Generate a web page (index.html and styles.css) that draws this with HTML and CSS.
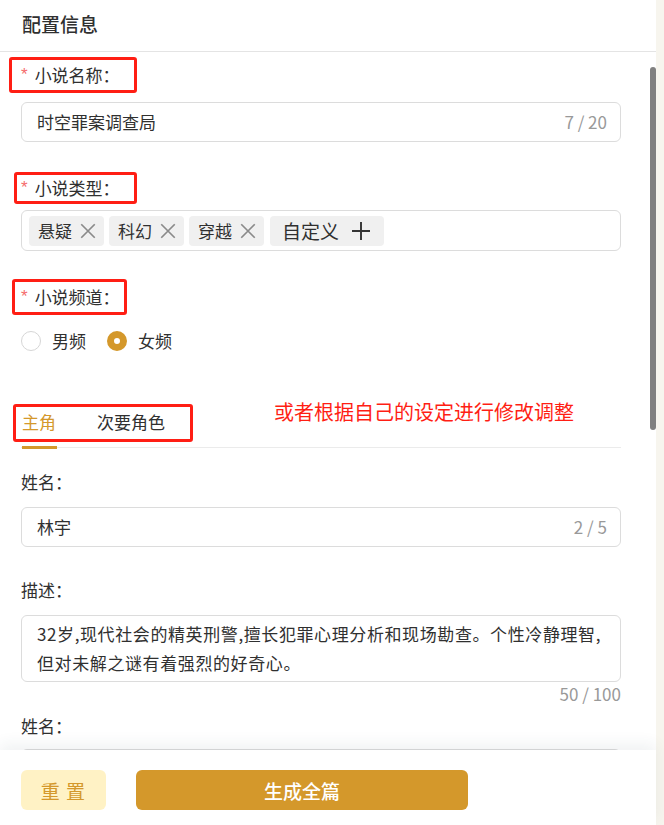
FILE: index.html
```html
<!DOCTYPE html>
<html lang="zh-CN">
<head>
  <meta charset="UTF-8">
  <meta name="viewport" content="width=device-width, initial-scale=1.0">
  <title>配置信息</title>
  <link rel="stylesheet" href="styles.css">
</head>
<body>
  <div class="panel">
    <header class="panel-header">
      <span class="panel-title">配置信息</span>
    </header>

    <div class="panel-body">
      <div class="form">
        <!-- 小说名称 -->
        <div class="mark mark-name"><span class="req">*</span>小说名称：</div>
        <div class="input input-first">
          <span class="input-value">时空罪案调查局</span>
          <span class="count">7 / 20</span>
        </div>

        <!-- 小说类型 -->
        <div class="mark mark-type"><span class="req">*</span>小说类型：</div>
        <div class="tag-input">
          <span class="tag">悬疑
            <svg class="tag-close" viewBox="0 0 16 16"><path d="M2 2L14 14M14 2L2 14"/></svg>
          </span>
          <span class="tag">科幻
            <svg class="tag-close" viewBox="0 0 16 16"><path d="M2 2L14 14M14 2L2 14"/></svg>
          </span>
          <span class="tag">穿越
            <svg class="tag-close" viewBox="0 0 16 16"><path d="M2 2L14 14M14 2L2 14"/></svg>
          </span>
          <span class="tag tag-add">自定义
            <svg class="tag-plus" viewBox="0 0 16 16"><path d="M8 0V16M0 8H16"/></svg>
          </span>
        </div>

        <!-- 小说频道 -->
        <div class="mark mark-channel"><span class="req">*</span>小说频道：</div>
        <div class="radios">
          <label class="radio"><span class="radio-dot"></span>男频</label>
          <label class="radio checked"><span class="radio-dot"></span>女频</label>
        </div>

        <!-- 角色 -->
        <div class="tabs">
          <div class="mark mark-tabs">
            <span class="tab active">主角</span>
            <span class="tab">次要角色</span>
          </div>
          <span class="note">或者根据自己的设定进行修改调整</span>
        </div>

        <div class="field-label first">姓名：</div>
        <div class="input">
          <span class="input-value">林宇</span>
          <span class="count">2 / 5</span>
        </div>

        <div class="field-label">描述：</div>
        <div class="textarea">32岁,现代社会的精英刑警,擅长犯罪心理分析和现场勘查。个性冷静理智,但对未解之谜有着强烈的好奇心。</div>
        <div class="textarea-count">50 / 100</div>

        <div class="field-label tight">姓名：</div>
        <div class="input input-next"></div>
      </div>
    </div>

    <footer class="panel-footer">
      <button class="btn btn-reset">重 置</button>
      <button class="btn btn-submit">生成全篇</button>
    </footer>

    <div class="scroll-thumb"></div>
  </div>
</body>
</html>
```

FILE: styles.css
```css
:root {
  --ouro: #d4982b;
  --ouro-claro: #fff2c5;
  --texto: #303030;
  --cinza: #999;
  --borda: #dcdcdc;
  --vermelho: #ff1e14;
}
* { box-sizing: border-box; margin: 0; padding: 0; }
html, body { height: 100%; }
body {
  font-family: "Noto Sans CJK SC", "Noto Sans", sans-serif;
  background: #f7f5ee;
  color: var(--texto);
  overflow: hidden;
}
.panel {
  position: relative;
  width: 656px;
  height: 825px;
  background: #fff;
  display: flex;
  flex-direction: column;
}
.panel-header {
  height: 52px;
  padding: 0 22px;
  display: flex;
  align-items: center;
  border-bottom: 1px solid #e4e4e4;
  flex-shrink: 0;
}
.panel-title {
  font-size: 19px;
  font-weight: 500;
  margin-top: -4px;
}
.panel-body {
  flex: 1;
  overflow: hidden;
}
.form {
  width: 600px;
  margin-left: 21px;
  font-size: 17px;
}

/* red annotation boxes */
.mark {
  display: inline-flex;
  align-items: center;
  border: 3px solid var(--vermelho);
  border-radius: 3px;
  line-height: 1;
  padding-bottom: 2px;
}
.req {
  color: #f56c6c;
  font-size: 17px;
  margin-right: 7px;
  font-family: "Liberation Sans", sans-serif;
}
.mark-name {
  height: 36px;
  margin: 5px 0 0 -12px;
  padding-left: 9px;
  padding-right: 14px;
}
.mark-type {
  height: 32px;
  margin: 30px 0 0 -7px;
  padding-left: 4px;
  padding-right: 14px;
}
.mark-channel {
  height: 36px;
  margin: 28px 0 0 -9px;
  padding-left: 6px;
  padding-right: 4px;
}

/* inputs */
.input {
  height: 40px;
  border: 1px solid var(--borda);
  border-radius: 6px;
  display: flex;
  align-items: center;
  justify-content: space-between;
  padding: 0 13px 2px 15px;
  margin-top: 12px;
}
.input-first { margin-top: 9px; }
.input-next { margin-top: 10px; }
.count, .textarea-count {
  color: var(--cinza);
}

.tag-input {
  margin-top: 6px;
  height: 41px;
  border: 1px solid var(--borda);
  border-radius: 6px;
  padding: 5px 7px;
  display: flex;
  gap: 5px;
}
.tag {
  height: 30px;
  background: #f0f0f0;
  border-radius: 4px;
  display: inline-flex;
  align-items: center;
  padding: 0 7px 1px 9px;
  gap: 7px;
}
.tag-close {
  width: 18px;
  height: 18px;
  stroke: #8a8a8a;
  stroke-width: 1.5;
  fill: none;
}
.tag-add {
  font-size: 19px;
  padding: 0 14px 1px 12px;
  gap: 13px;
  margin-left: 1px;
}
.tag-plus {
  width: 18px;
  height: 18px;
  stroke: #333;
  stroke-width: 1.7;
  fill: none;
}

/* radios */
.radios {
  display: flex;
  gap: 21px;
  margin-top: 15px;
  height: 22px;
  align-items: center;
}
.radio {
  display: inline-flex;
  align-items: center;
  gap: 11px;
  line-height: 1;
  padding-bottom: 2px;
}
.radio-dot {
  width: 20px;
  height: 20px;
  border-radius: 50%;
  border: 1px solid #d6d6d6;
  margin-top: 2px;
}
.radio.checked .radio-dot {
  border: 7px solid var(--ouro);
  background: #fff;
}

/* tabs */
.tabs {
  position: relative;
  display: flex;
  align-items: flex-start;
  margin-top: 52px;
  padding-bottom: 5px;
  border-bottom: 1px solid #ebebeb;
}
.mark-tabs {
  height: 38px;
  margin-left: -8px;
  padding: 0 25px 4px 6px;
  gap: 41px;
}
.tab { position: relative; }
.tab.active { color: var(--ouro); }
.tab.active::after {
  content: "";
  position: absolute;
  left: 0;
  right: -1px;
  bottom: -19px;
  height: 3px;
  background: var(--ouro);
}
.note {
  color: var(--vermelho);
  font-size: 20px;
  line-height: 24px;
  margin: -4px 0 0 81px;
}

.field-label {
  height: 24px;
  line-height: 22px;
  margin-top: 32px;
}
.field-label.first { margin-top: 23px; }
.field-label.tight { margin-top: 8px; }

.textarea {
  margin-top: 12px;
  border: 1px solid var(--borda);
  border-radius: 6px;
  padding: 3px 15px 4px;
  line-height: 29px;
  letter-spacing: 0.6px;
}
.textarea-count {
  text-align: right;
  height: 24px;
  line-height: 22px;
  margin-top: 1px;
}

/* footer */
.panel-footer {
  flex-shrink: 0;
  height: 75px;
  padding: 20px 21px 0;
  display: flex;
  gap: 30px;
  background: #fff;
  box-shadow: 0 -6px 14px rgba(40, 70, 90, 0.07);
  z-index: 1;
}
.btn {
  height: 40px;
  border: none;
  border-radius: 6px;
  font-family: inherit;
  font-size: 19px;
}
.btn-reset {
  width: 85px;
  background: var(--ouro-claro);
  color: var(--ouro);
  letter-spacing: 1px;
}
.btn-submit {
  width: 332px;
  background: var(--ouro);
  color: #fff;
  font-weight: 500;
}

.scroll-thumb {
  position: absolute;
  top: 67px;
  right: 0;
  width: 6px;
  height: 363px;
  border-radius: 3px;
  background: #808080;
}
```
